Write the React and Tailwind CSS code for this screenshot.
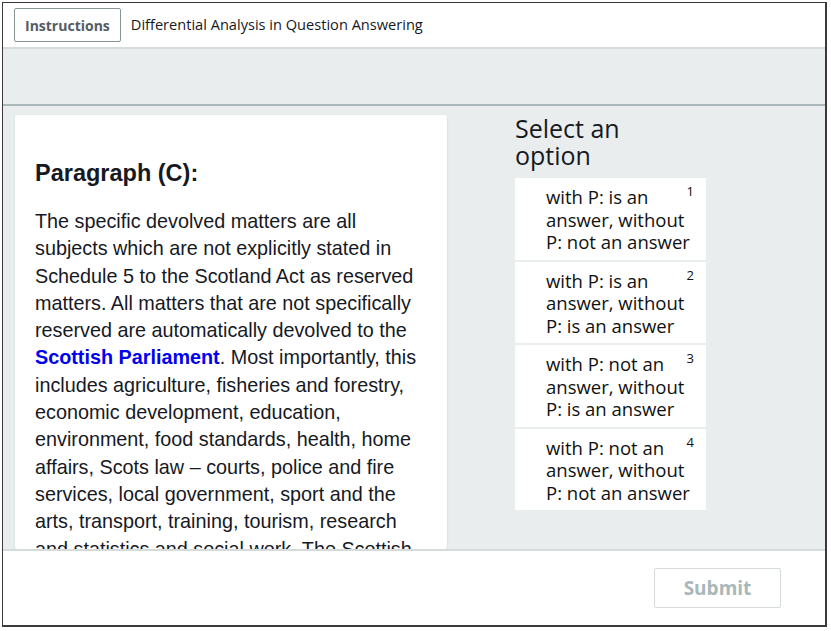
import React from 'react';

const options = [
    { n: 1, text: 'with P: is an answer, without P: not an answer' },
    { n: 2, text: 'with P: is an answer, without P: is an answer' },
    { n: 3, text: 'with P: not an answer, without P: is an answer' },
    { n: 4, text: 'with P: not an answer, without P: not an answer' },
];

const ui = { fontFamily: '"Open Sans", "Noto Sans", Arial, sans-serif' };
const serifless = { fontFamily: '"Liberation Sans", Arial, Helvetica, sans-serif' };

export default function App() {
    return (
        <div className="w-[831px] h-[631px] bg-white pl-[2px] pt-[2px]" style={ui}>
            <div className="w-[825px] h-[625px] border-l border-t border-r-2 border-b-2 border-[#3a3a3a] flex flex-col overflow-hidden">
                {/* Header */}
                <div className="h-[46px] shrink-0 flex items-center pl-[11px] gap-[10px] bg-white border-b-2 border-[#d5dbdb]">
                    <button className="h-[34px] px-[10px] border border-[#879596] rounded-[2px] text-[14px] font-bold text-[#545b64]">
                        Instructions
                    </button>
                    <span className="text-[14.6px] text-[#16191f]">Differential Analysis in Question Answering</span>
                </div>

                {/* Toolbar band */}
                <div className="h-[57px] shrink-0 bg-[#eaeded] border-b-2 border-[#aab7b8]" />

                {/* Main */}
                <div className="flex-1 min-h-0 bg-[#eaeded] flex overflow-hidden">
                    <div className="ml-[12px] mt-[9px] w-[432px] shrink-0 bg-white rounded-[2px] shadow-[0_1px_2px_rgba(0,0,0,0.15)] pl-[20px] pr-[20px] pt-[44px]" style={serifless}>
                        <h2 className="text-[23.5px] font-bold text-[#16191f] leading-[28px] mb-[21px]">Paragraph (C):</h2>
                        <p className="text-[19.8px] leading-[27.3px] text-[#16191f]">
                            The specific devolved matters are all subjects which are not explicitly stated in Schedule 5 to the Scotland Act as reserved matters. All matters that are not specifically reserved are automatically devolved to the{' '}
                            <span className="font-bold text-[#0000ee]">Scottish Parliament</span>. Most importantly, this includes agriculture, fisheries and forestry, economic development, education, environment, food standards, health, home affairs, Scots law – courts, police and fire services, local government, sport and the arts, transport, training, tourism, research and statistics and social work. The Scottish Parliament has the ability to alter income tax in Scotland by up to 3 pence in the pound.
                        </p>
                    </div>

                    <div className="ml-[68px] pt-[9px] w-[191px] shrink-0">
                        <h3 className="text-[25px] leading-[27px] text-[#16191f] mb-[9px]">Select an<br />option</h3>
                        <div className="bg-white flex flex-col">
                            {options.map((o, i) => (
                                <div key={o.n} className={`relative pl-[31px] pr-[8px] pt-[8px] pb-[6px] ${i > 0 ? 'border-t-2 border-[#eaeded]' : ''}`}>
                                    <div className="w-[154px] text-[18.5px] font-medium leading-[22.5px] text-[#0f1111]">{o.text}</div>
                                    <span className="absolute right-[12px] top-[4px] text-[13px] font-medium text-[#0f1111]">{o.n}</span>
                                </div>
                            ))}
                        </div>
                    </div>
                </div>

                {/* Footer */}
                <div className="h-[76px] shrink-0 bg-white border-t-2 border-[#d5dbdb] flex items-center justify-end pr-[44px]">
                    <button className="w-[127px] h-[40px] border border-[#d5dbdb] rounded-[2px] text-[19px] font-bold text-[#aab7b8]">
                        Submit
                    </button>
                </div>
            </div>
        </div>
    );
}
